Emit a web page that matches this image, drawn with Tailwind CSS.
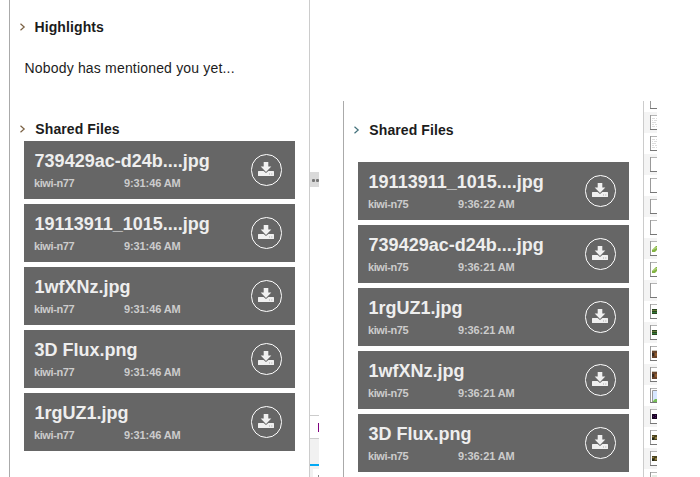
<!DOCTYPE html>
<html lang="en">
<head>
<meta charset="utf-8">
<title>Shared Files</title>
<script src="https://cdn.jsdelivr.net/npm/@tailwindcss/browser@4"></script>
</head>
<body class="bg-white w-[700px] h-[477px] overflow-hidden font-['Liberation_Sans',Arial,sans-serif] text-[#1c1c1c]">
<svg class="hidden">
  <symbol id="download" viewBox="0 0 16 14"><path d="M5.700 0h4.600v4.500h3L8 10 2.700 4.500h3z"/><path d="M.6 9H5.600L8 11l2.400-2h5q.6 0 .6.600v3.800q0 .6-.6.600H.6Q0 14 0 13.400V9.600Q0 9 .6 9z"/><path d="M11 12h1m1.300 0h1" stroke="#aaaaaa" stroke-width="1"/></symbol>
  <symbol id="chevron" viewBox="0 0 6 8"><path d="M.5 .8 4.200 4 .5 7.200" fill="none" stroke="currentColor" stroke-width="1.2"/></symbol>
</svg>
<div class="flex w-[700px] h-[477px]">
  <section class="ml-[9px] w-[300px] shrink-0 h-full border-l border-[#aaaaaa]">
    <h2 class="flex items-center h-4 mt-[19px] pl-[10px] text-sm font-bold tracking-[0.1px] whitespace-nowrap"><svg class="w-[6px] h-2 mr-[8.5px] text-[#7a6042]"><use href="#chevron"/></svg>Highlights</h2>
    <p class="mt-[25px] h-4 leading-4 pl-[14.5px] text-sm tracking-[0.18px] whitespace-nowrap">Nobody has mentioned you yet...</p>
    <h2 class="flex items-center h-4 mt-[45px] pl-[10px] text-sm font-bold tracking-[0.1px] whitespace-nowrap"><svg class="w-[6px] h-2 mr-[9.3px] text-[#7a6042]"><use href="#chevron"/></svg>Shared Files</h2>
    <div id="left" class="flex flex-col gap-[5px] mt-1 ml-[14px] w-[271px]"></div>
  </section>

  <div class="flex flex-col w-[10px] shrink-0 h-full border-l border-[#cccccc]">
    <div class="mt-[172px] h-[15px] bg-[#dadada] flex items-center gap-px pl-[2px] pt-[2px]"><i class="size-[3px] rounded-[1px] bg-[#777777]"></i><i class="size-[3px] rounded-[1px] bg-[#777777]"></i></div>
    <div class="mt-[228px] h-[23px] border-t border-[#cccccc] flex justify-end items-center"><i class="w-px h-[9px] bg-[#800080]"></i></div>
    <div class="h-[26px] border-t border-[#cccccc] bg-[#f1f1f1]"></div>
    <div class="h-[2px] bg-[#03a9f4]"></div>
    <div class="flex-1 bg-[#f1f1f1] pt-[3px] pl-[3px]"><div class="h-full bg-white flex justify-end items-end"><i class="w-px h-[2px] bg-[#888888]"></i></div></div>
  </div>

  <section class="mt-[101px] ml-6 w-[300px] shrink-0 h-[376px] border-l border-[#aaaaaa]">
    <h2 class="flex items-center h-4 mt-[21px] pl-[10px] text-sm font-bold tracking-[0.1px] whitespace-nowrap"><svg class="w-[6px] h-2 mr-[9.3px] text-[#42707a]"><use href="#chevron"/></svg>Shared Files</h2>
    <div id="right" class="flex flex-col gap-[5px] mt-6 ml-[14px] w-[271px]"></div>
  </section>

  <div id="strip" class="mt-[101px] w-[14px] shrink-0 h-[376px] overflow-hidden border-l border-[#cccccc] flex flex-col"></div>
</div>
<script>
const card = (name, user, time) => `
<article class="flex justify-between h-[58px] bg-[#666666] pl-[10px] pr-[13px]">
  <div class="pt-[9px] whitespace-nowrap font-bold">
    <h3 class="h-[22px] leading-[22px] pl-[0.6px] text-[18px] text-[#eeeeee]">${name}</h3>
    <div class="flex mt-[5px] h-3 leading-3 text-[11px] text-[#cccccc]"><span class="w-[90px] tracking-[-0.4px]">${user}</span><span class="tracking-[-0.1px]">${time}</span></div>
  </div>
  <div class="mt-[13px] w-[31px] h-8 rounded-full border border-white flex pl-[6px] pt-[7px] text-[#f0f0f0]"><svg class="w-4 h-[14px] shrink-0" fill="currentColor"><use href="#download"/></svg></div>
</article>`;
left.innerHTML = ["739429ac-d24b....jpg","19113911_1015....jpg","1wfXNz.jpg","3D Flux.png","1rgUZ1.jpg"]
  .map(n => card(n, "kiwi-n77", "9:31:46 AM")).join("");
right.innerHTML = [["19113911_1015....jpg","22"],["739429ac-d24b....jpg","21"],["1rgUZ1.jpg","21"],["1wfXNz.jpg","21"],["3D Flux.png","21"]]
  .map(([n,s]) => card(n, "kiwi-n75", `9:36:${s} AM`)).join("");
const art = {
  blank: '',
  text: '<path d="M2 3.5h3m1 0h1M2 5.5h1m1 0h3M2 7.5h4m1 0h1M2 9.5h2m1 0h2M2 11.5h3m1 0h1" stroke="#ddd"/>',
  green: '<path d="M2 11V9l2-2 2-2h1v4l-2 2z" fill="#82b342"/><path d="M2 9l4-3h1v1l-4 2z" fill="#b4d77c"/>',
  stripe: '<path d="M2 5h5v5H2z" fill="#29451f"/><path d="M2 6.5h5" stroke="#667a36"/><path d="M2 8.5h5" stroke="#347b39"/>',
  brown: '<path d="M2 4h5v8H2z" fill="#68452c"/><path d="M2 4h5v1H2z" fill="#c9c3b7"/><path d="M2 7h2v3H2z" fill="#362a20"/><path d="M5 7h2v3H5z" fill="#915a2c"/>',
  image: '<path d="M2.5 15V2.5H7" fill="none" stroke="#999"/><path d="M3 3h4v9H3z" fill="#d7e7ff"/><path d="M3 13l2-2h2v3H3z" fill="#75bd55"/>',
  purple: '<path d="M2 5h5v5H2z" fill="#180522"/><path d="M3 7h1v1H3zm2-1h1v1H5zm0 2h1v1H5z" fill="#53106f"/>',
  olive: '<path d="M2 5h5v5H2z" fill="#4b431e"/><path d="M2 6h2v1H2zm3 1h2v2H5z" fill="#8b7940"/><path d="M2 8h2v2H2z" fill="#252918"/>',
  pale: '<path d="M2 3h5v5H2z" fill="#e5eee5"/>'
};
strip.innerHTML = ["blank","text","text","blank","blank","blank","blank","green","green","blank","stripe","stripe","brown","brown","image","purple","olive","olive","pale"]
  .map((k,i) => `<div class="h-[21px] shrink-0 pt-[3px] pl-[6px] ${i ? '' : '-mt-[10px]'} ${i % 2 ? 'bg-[#f4f4f4]' : 'bg-white'}"><svg class="block w-[7px] h-[15px]" viewBox="0 0 7 15"><path d="M0 0h7v15H0z" fill="#fff"/>${art[k]}<path d="M0 .5h7" stroke="#b5b5b5"/><path d="M.5 0v15" stroke="#999"/><path d="M0 14.5h7" stroke="#777"/></svg></div>`).join("");
</script>
</body>
</html>
